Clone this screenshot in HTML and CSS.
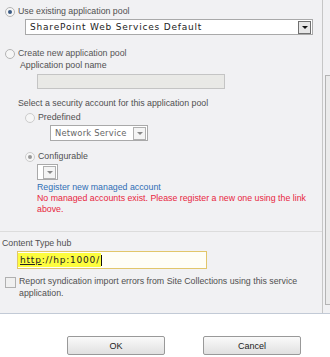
FILE: index.html
```html
<!DOCTYPE html>
<html lang="en">
<head>
    <meta charset="UTF-8">
    <title>Service Application Settings</title>
    <link rel="stylesheet" href="styles.css">
</head>
<body>

    <!-- Scrolling settings panel -->
    <div class="panel">
        <div class="content">
            <div class="radio-row top-row">
                <span class="radio checked"></span>
                <span>Use existing application pool</span>
            </div>
            <div class="select pool-select">
                <span class="select-text">SharePoint Web Services Default</span>
                <span class="select-btn dark"><span class="arrow"></span></span>
            </div>

            <div class="radio-row create-row">
                <span class="radio"></span>
                <span>Create new application pool</span>
            </div>
            <div class="label pool-name">Application pool name</div>
            <div class="disabled-input"></div>

            <div class="label account-label">Select a security account for this application pool</div>
            <div class="radio-row sub-row">
                <span class="radio faded"></span>
                <span>Predefined</span>
            </div>
            <div class="select service-select">
                <span class="select-text">Network Service</span>
                <span class="select-btn"><span class="arrow light"></span></span>
            </div>

            <div class="radio-row sub-row config-row">
                <span class="radio checked faded"></span>
                <span>Configurable</span>
            </div>
            <div class="select tiny-select">
                <span class="select-text"></span>
                <span class="select-btn"><span class="arrow light"></span></span>
            </div>
            <div class="link">Register new managed account</div>
            <div class="error">No managed accounts exist. Please register a new one using the link above.</div>

            <div class="divider"></div>

            <div class="label hub-label">Content Type hub</div>
            <div class="hub-input"><span class="highlight"><u>http</u>://hp:1000/</span><span class="caret"></span></div>

            <div class="check-row">
                <span class="checkbox"></span>
                <span>Report syndication import errors from Site Collections using this service application.</span>
            </div>
        </div>
        <div class="scrollbar">
            <div class="thumb"></div>
            <div class="down"></div>
        </div>
    </div>

    <!-- Dialog buttons -->
    <div class="actions">
        <button class="btn">OK</button>
        <button class="btn">Cancel</button>
    </div>

</body>
</html>
```

FILE: styles.css
```css
body {
    margin: 0;
    background: #ffffff;
    font-family: 'Liberation Sans', Arial, sans-serif;
    font-size: 8.8px;
    color: #505050;
}

/* Scrolling panel */
.panel {
    display: flex;
    height: 313px;
    background: #f1f1f3;
    border-bottom: 1px solid #c2cad6;
}

.content {
    flex: 1;
    padding-left: 5px;
}

.radio-row {
    display: flex;
    align-items: center;
    gap: 3px;
    line-height: 11px;
}

.top-row {
    margin-top: 6px;
}

.radio {
    width: 8px;
    height: 8px;
    border: 1px solid #b4b4b4;
    border-radius: 50%;
    background: #f6f6f6;
    position: relative;
}

.radio.checked::after {
    content: "";
    position: absolute;
    left: 2px;
    top: 2px;
    width: 4px;
    height: 4px;
    border-radius: 50%;
    background: #3a5a84;
}

.radio.faded {
    border-color: #cccccc;
}

.radio.checked.faded::after {
    background: #999999;
}

.select {
    display: flex;
    align-items: center;
    background: #ffffff;
    border: 1px solid #a9a9a9;
    height: 14px;
    font-family: 'DejaVu Sans', Verdana, sans-serif;
    font-size: 9px;
    letter-spacing: 0.8px;
    white-space: nowrap;
    color: #222;
}

.select-text {
    flex: 1;
    padding-left: 4px;
}

.select-btn {
    flex-shrink: 0;
    width: 11px;
    height: 11px;
    margin-right: 1px;
    border: 1px solid #b0b0b0;
    background: #f4f4f4;
    display: flex;
    align-items: center;
    justify-content: center;
}

.select-btn.dark {
    border-color: #707070;
    background: #e6e6e6;
}

.arrow {
    width: 0;
    height: 0;
    border-left: 3px solid transparent;
    border-right: 3px solid transparent;
    border-top: 3px solid #111;
}

.arrow.light {
    border-top-color: #888;
}

.pool-select {
    margin: 2px 0 0 20px;
    width: 286px;
}

.create-row {
    margin-top: 13px;
    color: #555;
}

.label {
    line-height: 11px;
}

.pool-name {
    margin-left: 15px;
    margin-top: 1px;
}

.disabled-input {
    margin: 3px 0 0 32px;
    width: 186px;
    height: 13px;
    border: 1px solid #c4c4c4;
    background: #e9e9e6;
}

.account-label {
    margin: 9px 0 0 13px;
}

.sub-row {
    margin: 3px 0 0 20px;
}

.service-select {
    margin: 2px 0 0 45px;
    width: 96px;
    font-size: 8.4px;
    letter-spacing: 0.2px;
    color: #666;
}

.config-row {
    margin-top: 10px;
}

.tiny-select {
    margin: 2px 0 0 32px;
    width: 19px;
}

.tiny-select .select-text {
    padding-left: 0;
}

.link {
    margin: 1px 0 0 32px;
    color: #2f6eb5;
    line-height: 12px;
}

.error {
    margin-left: 32px;
    color: #e8263e;
    line-height: 11px;
}

.divider {
    margin: 16px 0 0 -5px;
    border-top: 1px solid #dcdcdc;
}

.hub-label {
    margin: 6px 0 0 -3px;
}

.hub-input {
    display: flex;
    align-items: center;
    margin: 2px 0 0 12px;
    width: 188px;
    height: 16px;
    border: 1px solid #e2c66a;
    background: #fffef6;
    font-family: 'DejaVu Sans', Verdana, sans-serif;
    font-size: 9px;
    letter-spacing: 0.8px;
    color: #222;
}

.highlight {
    background: #fdfd3e;
    padding: 2px 1px 2px 2px;
}

.caret {
    width: 1px;
    height: 11px;
    background: #111;
}

.check-row {
    display: flex;
    gap: 3px;
    margin-top: 6px;
    line-height: 12px;
    padding-right: 10px;
}

.checkbox {
    flex-shrink: 0;
    width: 9px;
    height: 9px;
    margin-top: 2px;
    border: 1px solid #b0b0b0;
    background: #f0f0f0;
}

/* Scrollbar */
.scrollbar {
    width: 7px;
    border-left: 1px solid #c6c6c6;
    display: flex;
    flex-direction: column;
    justify-content: flex-end;
}

.thumb {
    height: 228px;
    margin-left: 2px;
    border: 1px solid #b4b4b4;
    border-right: none;
    background: #ebebeb;
}

.down {
    height: 8px;
}

/* Buttons */
.actions {
    display: flex;
    gap: 38px;
    padding: 22px 0 0 67px;
}

.btn {
    width: 98px;
    height: 19px;
    font-family: 'Liberation Sans', Arial, sans-serif;
    font-size: 9px;
    color: #222;
    border: 1px solid #999;
    border-radius: 2px;
    background: linear-gradient(#fafafa, #e0e0e0);
}
```
